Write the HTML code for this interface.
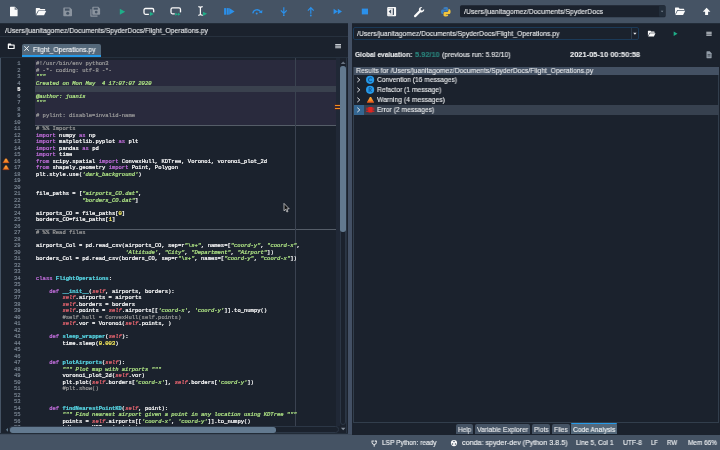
<!DOCTYPE html>
<html>
<head>
<meta charset="utf-8">
<title>Spyder</title>
<style>
*{box-sizing:border-box;margin:0;padding:0}
html,body{width:720px;height:450px;overflow:hidden;background:#1b222d;font-family:"Liberation Sans",sans-serif;color:#e0e1e3}
.abs{position:absolute}
.t{-webkit-text-stroke:.13px;will-change:transform;position:absolute;white-space:nowrap;line-height:1.15;transform-origin:0 50%;display:block}
#toolbar{left:0;top:0;width:720px;height:22.8px;background:#455364}
#tbshadow{left:0;top:22.8px;width:720px;height:.7px;background:#222c38}
#pathsep{left:0;top:36px;width:349px;height:1.2px;background:#27313e}
#divider{left:348px;top:23.4px;width:4px;height:411.2px;background:#435064}
/* left pane */
#tab{left:22.2px;top:43.8px;width:78.6px;height:12.9px;background:#54687a;border-radius:2px 2px 0 0}
#tabline{left:22.2px;top:54.9px;width:78.6px;height:1.9px;background:#259ae9}
#editor{left:1.3px;top:57px;width:345px;height:369px;background:#1b222d;overflow:hidden}
#leftborder{left:0;top:56.5px;width:1.3px;height:378px;background:#455364}
#edtop{left:0;top:56.5px;width:347.5px;height:1.5px;background:#26313e}
#cellbg{left:33.7px;top:2.8px;width:300.6px;height:65.4px;background:#292a3d}
#curline{left:33.7px;top:29.1px;width:300.6px;height:6.2px;background:#3a414e}
.cellsep{left:33.7px;width:300.6px;height:1px;background:#555d68}
#edgeline{left:293.6px;top:1px;width:1.1px;height:370px;background:#3a4250}
#flagarea{left:334.3px;top:1px;width:4.3px;height:370px;background:#202836}
.flag{left:333.9px;width:4.4px;height:1.3px;background:#f28e1c;box-shadow:0 0 0 .35px #7a2a1c}
#vscroll{left:338.6px;top:8.8px;width:6.2px;height:359.7px;background:#1b222d;border:.6px solid #2c3746;border-radius:3.1px}
#vhandle{left:339px;top:8.7px;width:5.5px;height:166.8px;background:#62798f;border-radius:2.7px}
#vsright{left:346.4px;top:58px;width:.9px;height:376px;background:#273240}
#hscroll{left:9.2px;top:426.3px;width:329.6px;height:6.7px;background:#1b222d;border:.6px solid #2c3746;border-radius:3.3px}
#hhandle{left:9.8px;top:426.8px;width:266.5px;height:5.8px;background:#62798f;border-radius:2.7px}
pre{will-change:transform;font-family:"Liberation Mono",monospace;font-size:5.5px;line-height:6.494px;white-space:pre;color:#fff}
#code{left:34.7px;top:4.1px;-webkit-text-stroke:.22px}
#lnum{left:0;top:4.1px;width:19.6px;text-align:right;color:#7d8996;-webkit-text-stroke:.15px}
#lnum b{color:#fff}
.k{color:#c670e0}.c{color:#999}.s{color:#b0e686;font-style:italic}.n{color:#faed5c}.d{color:#57d6e4;font-weight:bold}.i{color:#ee6772;font-style:italic}
/* right pane */
#combo{left:353px;top:27px;width:286px;height:12.6px;background:#1b222d;border:1px solid #1b3a58;border-radius:2px}
#combosep{left:631px;top:28px;width:1px;height:10.6px;background:#2e3b49}
#tree{left:353.3px;top:66.6px;width:366px;height:356.6px;border:.8px solid #323e4c;background:#1b222d}
#thead{left:354px;top:66.9px;width:364.8px;height:7.7px;background:#445163}
#selrow{left:364px;top:104.7px;width:354.8px;height:10px;background:#37414f}
#selbranch{left:354.2px;top:104.7px;width:9.8px;height:10px;background:#346792}
.btab{top:424.4px;height:9.8px;background:#455364;border-radius:2px 2px 0 0}
#status{left:0;top:435.2px;width:720px;height:14.8px;background:#455364}
#stband{left:0;top:433.6px;width:352px;height:2px;background:#3e4a5a}
#stshadow{left:0;top:433.1px;width:348px;height:.5px;background:#222c38}
</style>
</head>
<body>
<div id="toolbar" class="abs"></div>
<div id="tbshadow" class="abs"></div>
<svg class="abs" style="left:0;top:0" width="720" height="24" viewBox="0 0 720 24">
<!-- new file -->
<path d="M10.6 6.8h4.2l2.8 2.8v6.1a.6.6 0 0 1-.6.6h-6.4a.6.6 0 0 1-.6-.6v-8.3a.6.6 0 0 1 .6-.6z" fill="#fafafa"/>
<path d="M14.6 6.9v2.9h2.9z" fill="#455364" opacity=".75"/>
<!-- open folder -->
<path d="M36.3 8h3.2l1 1.1h4.2a.5.5 0 0 1 .5.5v1h-7.1l-2.3 4.2v-6.3a.5.5 0 0 1 .5-.5z" fill="#fafafa"/>
<path d="M38.6 11.1h7.6l-2.1 4.2h-7.8z" fill="#fafafa"/>
<!-- save -->
<g fill="#8b949f">
<path d="M64 7.6h6l2 2v6a.7.7 0 0 1-.7.7h-7.300a.7.7 0 0 1-.7-.7v-7.300a.7.700 0 0 1 .7-.7z"/>
</g>
<rect x="64.900" y="8.500" width="4.600" height="2.200" fill="#455364"/>
<circle cx="67.700" cy="13.300" r="1.500" fill="#455364"/>
<!-- save all -->
<path d="M90.300 9.300h1.200v6.300h6v1.200h-6.500a.7.700 0 0 1-.7-.7z" fill="#8b949f"/>
<path d="M93 6.800h5.200l1.900 1.900v5.300a.7.700 0 0 1-.7.700h-6.400a.7.700 0 0 1-.7-.7v-6.500a.7.700 0 0 1 .7-.7z" fill="#8b949f"/>
<rect x="93.600" y="7.700" width="4.200" height="2" fill="#455364"/>
<circle cx="96.200" cy="12.100" r="1.400" fill="#455364"/>
<!-- play -->
<path d="M119.800 8.700l5.400 3.050-5.400 3.050z" fill="#1fae88"/>
<!-- run cell -->
<rect x="144" y="8.500" width="9.700" height="5.800" rx="1.500" fill="none" stroke="#fafafa" stroke-width="1.300"/>
<rect x="148.900" y="12.300" width="6" height="4" fill="#455364"/>
<path d="M149.900 11.800l3.800 2.100-3.800 2.100z" fill="#1fae88"/>
<!-- run cell advance -->
<rect x="171" y="7.900" width="9.500" height="5.900" rx="1.500" fill="none" stroke="#fafafa" stroke-width="1.300"/>
<rect x="174.700" y="12.400" width="7" height="3.600" fill="#455364"/>
<path d="M175.300 12.700l2.600 1.500-2.600 1.500zM177.900 12.700l2.600 1.500-2.600 1.500z" fill="#1fae88"/>
<!-- run selection -->
<path d="M198.300 6.700c1.300 0 2.100.3 2.100 1.200v6.200c0 .9-.8 1.200-2.100 1.200M202.700 6.700c-1.300 0-2.200.3-2.200 1.200M202.700 15.300c-1.300 0-2.200-.3-2.200-1.200" fill="none" stroke="#fafafa" stroke-width="1.250"/>
<path d="M203 11.700l4 2.100-4 2.100z" fill="#1fae88"/>
<!-- debug -->
<g fill="#2b90ea">
<rect x="224.100" y="8.100" width="2.100" height="6.600"/>
<rect x="226.700" y="8.100" width="2.100" height="6.600"/>
<path d="M229.200 8.100l5.400 3.300-5.400 3.300z"/>
</g>
<!-- step over -->
<path d="M252.800 13.300a4.300 4.300 0 0 1 8-1.300" fill="none" stroke="#2b90ea" stroke-width="1.300"/>
<path d="M258.700 12.600l3.400.6.300-3.300z" fill="#2b90ea"/>
<circle cx="256.700" cy="13.600" r="1" fill="#2b90ea"/>
<!-- step into -->
<path d="M283.800 7.300v5.600M280.900 10.400l2.900 3 2.900-3" fill="none" stroke="#2b90ea" stroke-width="1.200"/>
<circle cx="283.800" cy="15.200" r=".9" fill="#2b90ea"/>
<!-- step out -->
<path d="M310.800 13.700v-5.600M307.900 10.700l2.900-3 2.900 3" fill="none" stroke="#2b90ea" stroke-width="1.200"/>
<circle cx="310.800" cy="15.500" r=".9" fill="#2b90ea"/>
<!-- continue -->
<path d="M333.600 8.800l4.200 2.700-4.200 2.700zM337.800 8.800l4.200 2.700-4.200 2.700z" fill="#2b90ea"/>
<!-- stop -->
<rect x="361.800" y="8.600" width="6.200" height="5.800" fill="#2b90ea"/>
<!-- maximize pane -->
<rect x="387.200" y="6.900" width="8.900" height="9.400" rx="1" fill="#fafafa"/>
<path d="M391.200 9.200v4.800l-2.500-2.400z" fill="#455364"/>
<rect x="392.700" y="8.300" width="1.300" height="6.600" fill="#455364"/>
<rect x="388.300" y="8" width="4.400" height=".5" fill="#455364" opacity=".6"/>
<rect x="388.300" y="14.700" width="4.400" height=".5" fill="#455364" opacity=".6"/>
<!-- wrench -->
<path d="M414.300 15.300l4.700-4.700a2.700 2.700 0 0 1 3.300-3.500l-1.700 1.700.3 1.500 1.500.3 1.700-1.700a2.700 2.700 0 0 1-3.500 3.300l-4.700 4.700a1.100 1.100 0 0 1-1.600-1.600z" fill="#fafafa"/>
<!-- python -->
<path d="M445.700 6.900c-2.300 0-2.200 1-2.200 1v1.100h2.300v.4h-3.200s-1.600-.2-1.600 2.300 1.400 2.400 1.400 2.400h.8v-1.200s0-1.400 1.400-1.400h2.200s1.300 0 1.300-1.300v-2.100s.2-1.200-2.400-1.200z" fill="#3c7ebf"/>
<path d="M445.900 16.500c2.300 0 2.200-1 2.200-1v-1.100h-2.300v-.4h3.200s1.600.2 1.600-2.300-1.400-2.400-1.400-2.400h-.8v1.200s0 1.400-1.400 1.400h-2.200s-1.300 0-1.300 1.300v2.100s-.2 1.200 2.400 1.200z" fill="#f2c53d"/>
<!-- combobox -->
<rect x="460" y="5.300" width="205.600" height="12" rx="1.500" fill="#1b222d"/>
<rect x="659" y="5.800" width="6.100" height="11" rx="1" fill="#222d3a"/>
<path d="M660.800 10.800l1.300 1.400 1.300-1.400z" fill="#7b8794"/>
<!-- folder -->
<path d="M675.500 7.600h3.100l1 1.100h4.100a.5.500 0 0 1 .5.500v.9h-6.900l-2.300 4.300v-6.300a.5.500 0 0 1 .5-.5z" fill="#fafafa"/>
<path d="M677.700 10.800h7.500l-2.100 4.200h-7.700z" fill="#fafafa"/>
<!-- up arrow -->
<path d="M706.600 7.700l3.800 4.100h-2.300v3.200h-3v-3.200h-2.300z" fill="#fafafa"/>
</svg>

<div id="pathsep" class="abs"></div>
<div id="tab" class="abs"></div>
<div id="tabline" class="abs"></div>
<div id="leftborder" class="abs"></div>
<div id="editor" class="abs">
<div id="cellbg" class="abs"></div>
<div id="curline" class="abs"></div>
<div class="cellsep abs" style="top:67.7px"></div>
<div class="cellsep abs" style="top:171.6px"></div>
<div id="edgeline" class="abs"></div>
<div id="flagarea" class="abs"></div>
<div class="flag abs" style="top:48.1px"></div>
<div class="flag abs" style="top:51.2px"></div>
<div id="vscroll" class="abs"></div>
<div id="vhandle" class="abs"></div>
<pre id="lnum" class="abs">1
2
3
4
<b>5</b>
6
7
8
9
10
11
12
13
14
15
16
17
18
19
20
21
22
23
24
25
26
27
28
29
30
31
32
33
34
35
36
37
38
39
40
41
42
43
44
45
46
47
48
49
50
51
52
53
54
55
56
57</pre>
<pre id="code" class="abs"><span class="c">#!/usr/bin/env python3</span>
<span class="c"># -*- coding: utf-8 -*-</span>
<span class="s">"""</span>
<span class="s">Created on Mon May  4 17:07:07 2020</span>

<span class="s">@author: juanis</span>
<span class="s">"""</span>

<span class="c"># pylint: disable=invalid-name</span>

<span class="c"># %% Imports</span>
<span class="k">import</span> numpy <span class="k">as</span> np
<span class="k">import</span> matplotlib.pyplot <span class="k">as</span> plt
<span class="k">import</span> pandas <span class="k">as</span> pd
<span class="k">import</span> time
<span class="k">from</span> scipy.spatial <span class="k">import</span> ConvexHull, KDTree, Voronoi, voronoi_plot_2d
<span class="k">from</span> shapely.geometry <span class="k">import</span> Point, Polygon
plt.style.use(<span class="s">'dark_background'</span>)


file_paths = [<span class="s">"airports_CO.dat"</span>,
              <span class="s">"borders_CO.dat"</span>]

airports_CO = file_paths[<span class="n">0</span>]
borders_CO=file_paths[<span class="n">1</span>]

<span class="c"># %% Read files</span>

airports_Col = pd.read_csv(airports_CO, sep=r<span class="s">"\s+"</span>, names=[<span class="s">"coord-y"</span>, <span class="s">"coord-x"</span>,
                           <span class="s">'Altitude'</span>, <span class="s">"City"</span>, <span class="s">"Department"</span>, <span class="s">"Airport"</span>])
borders_Col = pd.read_csv(borders_CO, sep=r<span class="s">"\s+"</span>, names=[<span class="s">"coord-y"</span>, <span class="s">"coord-x"</span>])


<span class="k">class</span> <span class="d">FlightOperations</span>:

    <span class="k">def</span> <span class="d">__init__</span>(<span class="i">self</span>, airports, borders):
        <span class="i">self</span>.airports = airports
        <span class="i">self</span>.borders = borders
        <span class="i">self</span>.points = <span class="i">self</span>.airports[[<span class="s">'coord-x'</span>, <span class="s">'coord-y'</span>]].to_numpy()
        <span class="c">#self.hull = ConvexHull(self.points)</span>
        <span class="i">self</span>.vor = Voronoi(<span class="i">self</span>.points, )

    <span class="k">def</span> <span class="d">sleep_wrapper</span>(<span class="i">self</span>):
        time.sleep(<span class="n">0.003</span>)


    <span class="k">def</span> <span class="d">plotAirports</span>(<span class="i">self</span>):
        <span class="s">""" Plot map with airports """</span>
        voronoi_plot_2d(<span class="i">self</span>.vor)
        plt.plot(<span class="i">self</span>.borders[<span class="s">'coord-x'</span>], <span class="i">self</span>.borders[<span class="s">'coord-y'</span>])
        <span class="c">#plt.show()</span>


    <span class="k">def</span> <span class="d">findNearestPointKD</span>(<span class="i">self</span>, point):
        <span class="s">""" Find nearest airport given a point in any location using KDTree """</span>
        points = <span class="i">self</span>.airports[[<span class="s">'coord-x'</span>, <span class="s">'coord-y'</span>]].to_numpy()
        kdtree = KDTree(points)</pre>
</div>
<div id="edtop" class="abs"></div>
<div id="vsright" class="abs"></div>
<div id="hscroll" class="abs"></div>
<div id="hhandle" class="abs"></div>
<div id="stshadow" class="abs"></div>
<div id="divider" class="abs"></div>

<div id="combo" class="abs"></div>
<div id="combosep" class="abs"></div>
<div id="tree" class="abs"></div>
<div id="thead" class="abs"></div>
<div id="selrow" class="abs"></div>
<div id="selbranch" class="abs"></div>

<div class="btab abs" style="left:456.2px;width:16.4px"></div>
<div class="btab abs" style="left:474.8px;width:54.8px"></div>
<div class="btab abs" style="left:531.6px;width:18.6px"></div>
<div class="btab abs" style="left:552px;width:17.6px"></div>
<div class="btab abs" style="left:571.2px;width:46px;top:422.6px;height:11.6px;background:#54687a"></div>
<div class="abs" style="left:571.2px;width:46px;top:422.5px;height:1.7px;background:#259ae9;border-radius:1.5px 1.5px 0 0"></div>
<div id="stband" class="abs"></div>
<div id="status" class="abs"></div>
<span class="t" id="t_path" style="left:4.50px;top:27.00px;font-size:7.70px;transform:scaleX(0.8897);color:#e6e8ea">/Users/juanitagomez/Documents/SpyderDocs/Flight_Operations.py</span>
<span class="t" id="t_tab" style="left:33.00px;top:46.00px;font-size:7.30px;transform:scaleX(0.9281);color:#f2f4f5">Flight_Operations.py</span>
<span class="t" id="t_tcombo" style="left:464.00px;top:8.00px;font-size:7.70px;transform:scaleX(0.8961);color:#e6e8ea">/Users/juanitagomez/Documents/SpyderDocs</span>
<span class="t" id="t_rcombo" style="left:357.30px;top:30.00px;font-size:7.70px;transform:scaleX(0.8875);color:#e6e8ea">/Users/juanitagomez/Documents/SpyderDocs/Flight_Operations.py</span>
<span class="t" id="t_ge" style="left:355.00px;top:51.00px;font-size:7.50px;transform:scaleX(0.8813);color:#e6e8ea"><b>Global evaluation:</b></span>
<span class="t" id="t_ge2" style="left:414.70px;top:51.00px;font-size:7.50px;transform:scaleX(0.9828);color:#2a857d"><b>5.92/10</b></span>
<span class="t" id="t_ge3" style="left:441.80px;top:51.00px;font-size:7.50px;transform:scaleX(0.9090);color:#e6e8ea">(previous run: 5.92/10)</span>
<span class="t" id="t_date" style="left:570.00px;top:51.00px;font-size:7.50px;transform:scaleX(0.9931);color:#e6e8ea"><b>2021-05-10 00:50:58</b></span>
<span class="t" id="t_thead" style="left:356.30px;top:67.00px;font-size:7.50px;transform:scaleX(0.9104);color:#e6e8ea">Results for /Users/juanitagomez/Documents/SpyderDocs/Flight_Operations.py</span>
<span class="t" id="t_conv" style="left:377.00px;top:76.00px;font-size:7.60px;transform:scaleX(0.8814);color:#e6e8ea">Convention (16 messages)</span>
<span class="t" id="t_ref" style="left:377.00px;top:86.00px;font-size:7.60px;transform:scaleX(0.8806);color:#e6e8ea">Refactor (1 message)</span>
<span class="t" id="t_warn" style="left:377.00px;top:96.00px;font-size:7.60px;transform:scaleX(0.8935);color:#e6e8ea">Warning (4 messages)</span>
<span class="t" id="t_err" style="left:377.00px;top:106.00px;font-size:7.60px;transform:scaleX(0.8800);color:#e6e8ea">Error (2 messages)</span>
<span class="t" id="t_bt0" style="left:458.00px;top:426.00px;font-size:7.20px;transform:scaleX(0.8921);color:#e6e8ea">Help</span>
<span class="t" id="t_bt1" style="left:477.00px;top:426.00px;font-size:7.20px;transform:scaleX(0.9339);color:#e6e8ea">Variable Explorer</span>
<span class="t" id="t_bt2" style="left:533.50px;top:426.00px;font-size:7.20px;transform:scaleX(0.9071);color:#e6e8ea">Plots</span>
<span class="t" id="t_bt3" style="left:553.70px;top:426.00px;font-size:7.20px;transform:scaleX(0.9086);color:#e6e8ea">Files</span>
<span class="t" id="t_bt4" style="left:572.70px;top:426.00px;font-size:7.20px;transform:scaleX(0.9287);color:#f2f4f5">Code Analysis</span>
<span class="t" id="t_st0" style="left:381.70px;top:439.00px;font-size:7.30px;transform:scaleX(0.8976);color:#f0f2f4">LSP Python: ready</span>
<span class="t" id="t_st1" style="left:462.00px;top:439.00px;font-size:7.30px;transform:scaleX(0.9777);color:#f0f2f4">conda: spyder-dev (Python 3.8.5)</span>
<span class="t" id="t_st2" style="left:575.70px;top:439.00px;font-size:7.30px;transform:scaleX(0.9150);color:#f0f2f4">Line 5, Col 1</span>
<span class="t" id="t_st3" style="left:623.00px;top:439.00px;font-size:7.30px;transform:scaleX(0.9184);color:#f0f2f4">UTF-8</span>
<span class="t" id="t_st4" style="left:651.20px;top:439.00px;font-size:7.30px;transform:scaleX(0.7985);color:#f0f2f4">LF</span>
<span class="t" id="t_st5" style="left:667.00px;top:439.00px;font-size:7.30px;transform:scaleX(0.8478);color:#f0f2f4">RW</span>
<span class="t" id="t_st6" style="left:687.80px;top:439.00px;font-size:7.30px;transform:scaleX(0.8825);color:#f0f2f4">Mem 66%</span>
<svg class="abs" style="left:0;top:0" width="720" height="450" viewBox="0 0 720 450">
<!-- browse tabs icon -->
<path d="M8.400 43.500h2.300l.8.900h2.600a.6.600 0 0 1 .6.600v3.400a.6.600 0 0 1-.6.600h-5.700a.6.600 0 0 1-.6-.6v-4.300a.6.600 0 0 1 .6-.6z" fill="#fafafa"/>
<rect x="9" y="45.600" width="4.500" height="2.400" fill="#1b222d"/>
<!-- tab close x -->
<path d="M24.400 46.200l4.400 4.600M28.800 46.200l-4.400 4.600" stroke="#eef0f2" stroke-width="1" fill="none"/>
<!-- editor hamburger -->
<path d="M335.200 44.600h5.800M335.200 46.200h5.800M335.200 47.800h5.800" stroke="#c9ced4" stroke-width="1.100"/>
<!-- vscroll arrows -->
<path d="M340.800 64l2.400-2.600 2.400 2.600z" fill="#697482"/>
<path d="M340.900 427.800l2.300 2.500 2.300-2.500z" fill="#828d99"/>
<!-- hscroll arrows -->
<path d="M8 427.900l-2.100 1.900 2.100 1.900z" fill="#60798b"/>
<!-- margin warnings -->
<defs><linearGradient id="wg" x1="0" y1="0" x2="0" y2="1"><stop offset="0" stop-color="#fbb13c"/><stop offset="1" stop-color="#f3701e"/></linearGradient></defs>
<path d="M5.300 158.400h1.400l2.700 4.600h-6.800z" fill="url(#wg)" stroke="#6e2418" stroke-width=".45"/>
<path d="M5.300 165.200h1.400l2.700 4.600h-6.800z" fill="url(#wg)" stroke="#6e2418" stroke-width=".45"/>
<!-- mouse cursor -->
<path d="M284 203.400v7.400l1.700-1.500 1.200 2.700 1.100-.5-1.200-2.600 2.400-.1z" fill="#111" stroke="#e8e8e8" stroke-width=".7" stroke-linejoin="round"/>
<!-- combo arrow -->
<path d="M633.200 32.800l1.700 1.900 1.700-1.900z" fill="#e6e8ea"/>
<!-- right folder -->
<path d="M648.300 30.700h2.200l.7.800h3a.4.400 0 0 1 .4.400v.8h-4.900l-1.800 3.300v-4.900a.4.400 0 0 1 .4-.4z" fill="#fafafa"/>
<path d="M650 33.200h5.500l-1.600 3.200h-5.700z" fill="#fafafa"/>
<!-- right play -->
<path d="M673.700 31.500l3.800 2.200-3.800 2.200z" fill="#1fae88"/>
<!-- right hamburger -->
<path d="M706.300 32.300h5.400M706.300 33.800h5.400M706.300 35.300h5.400" stroke="#c9ced4" stroke-width="1.100"/>
<!-- file icon -->
<path d="M706.900 51.300h2.800l1.900 1.900v4.600a.4.400 0 0 1-.4.400h-4.300a.4.400 0 0 1-.4-.4v-6.100a.4.400 0 0 1 .4-.4z" fill="#929ca7"/>
<path d="M707.600 54.600h2.900M707.600 56h2.900" stroke="#1b222d" stroke-width=".6"/>
<!-- tree chevrons -->
<g fill="none" stroke="#eef0f2" stroke-width=".95">
<path d="M357.300 77.7l2.500 2.200-2.500 2.200"/>
<path d="M357.300 87.7l2.500 2.200-2.500 2.200"/>
<path d="M357.300 97.7l2.500 2.200-2.500 2.200"/>
<path d="M357.300 107.7l2.500 2.200-2.500 2.200"/>
</g>
<!-- tree icons -->
<circle cx="370.100" cy="79.800" r="4.100" fill="#259ae9"/>
<path d="M371.900 78.400a2 2 0 1 0 0 2.800" fill="none" stroke="#155c9c" stroke-width="1.100"/>
<circle cx="370.100" cy="89.800" r="4.100" fill="#259ae9"/>
<path d="M369.100 92v-4.400h1.200a1.100 1.100 0 0 1 0 2.200h-1.200M370.300 89.800l1.100 2.200" fill="none" stroke="#155c9c" stroke-width="1"/>
<path d="M369.900 96.900h1.200l3 5.600h-7.200z" fill="url(#wg)"/>
<path d="M367.600 101.500h5.800l.7 1h-7.200z" fill="#e2531c"/>
<rect x="368.100" y="106.900" width="4.600" height="5.500" rx=".9" fill="#e0241f"/>
<path d="M366.200 108.200h2.100M366.200 109.800h2.100M366.200 111.400h2.100M372.300 108.200h2.100M372.300 109.800h2.100M372.300 111.400h2.100" stroke="#e0241f" stroke-width=".9"/>
<!-- status icons -->
<path d="M372 440.600v1.700a2.200 2.200 0 0 0 4.400 0v-1.700M374.200 444.500v2.200M373.100 440.300v1.600M375.300 440.300v1.600" fill="none" stroke="#fafafa" stroke-width=".9"/>
<circle cx="454" cy="443.100" r="3.100" fill="#fafafa"/>
<circle cx="454" cy="441.500" r=".8" fill="#455364"/>
<circle cx="452.500" cy="444" r=".8" fill="#455364"/>
<circle cx="455.500" cy="444" r=".8" fill="#455364"/>
</svg>

</body>
</html>
